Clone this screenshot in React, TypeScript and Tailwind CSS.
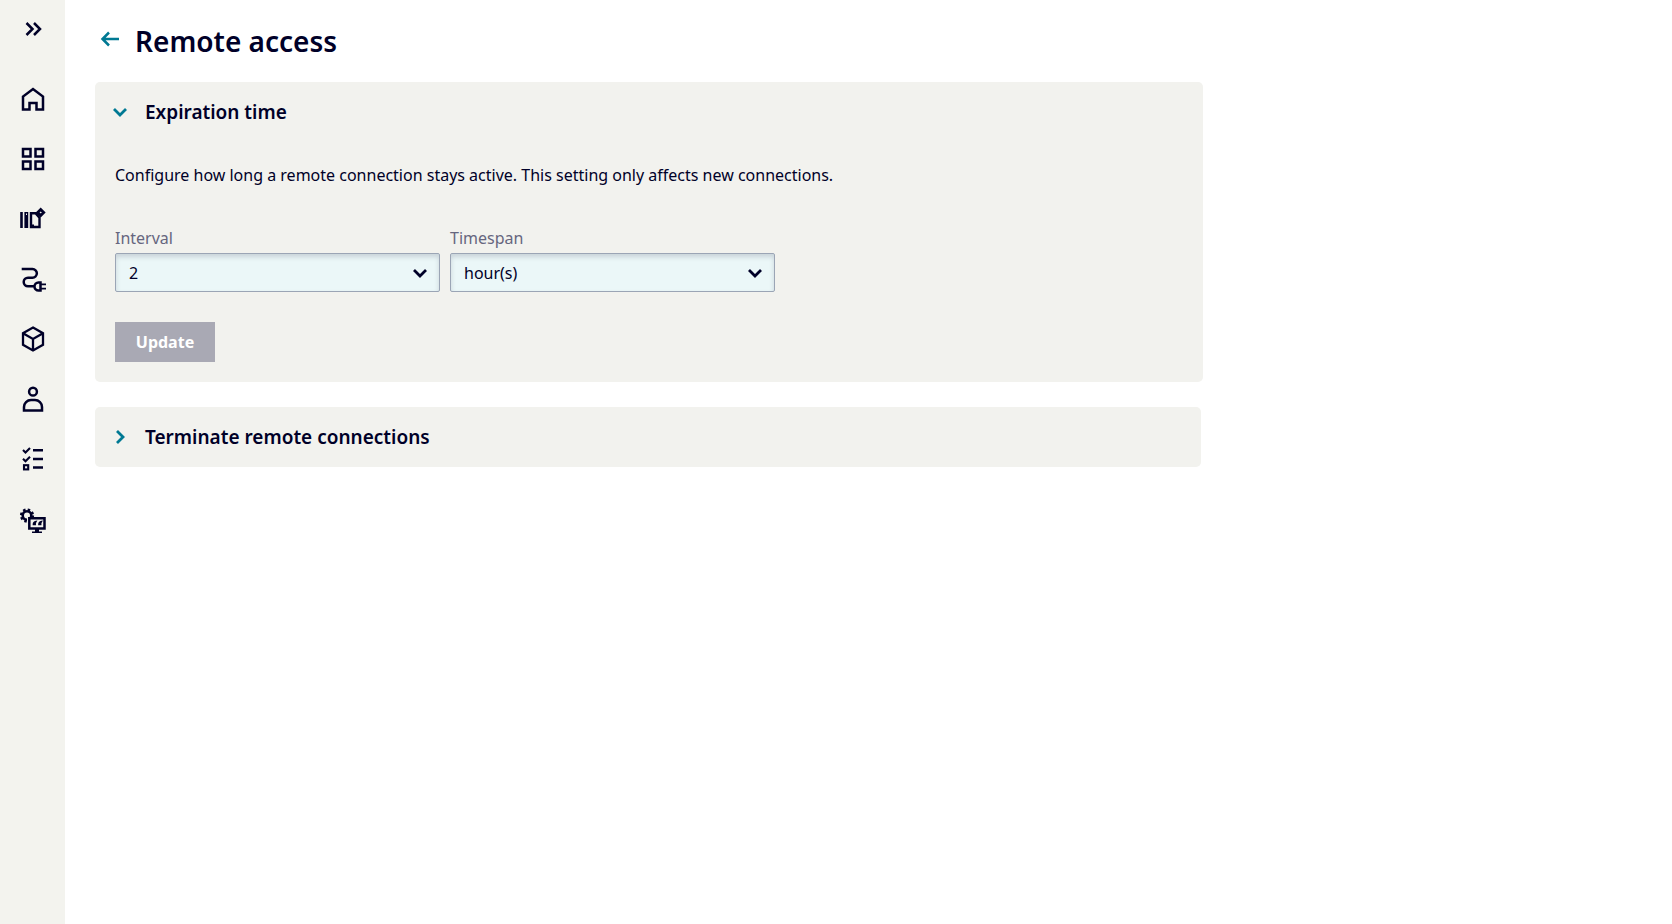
import React, { useState } from 'react';

const Icon = ({ children }: { children: React.ReactNode }) => (
  <svg width="28" height="28" viewBox="0 0 28 28" fill="none" stroke="currentColor" strokeWidth="2.5" aria-hidden="true">
    {children}
  </svg>
);

const Chevron = ({ className }: { className?: string }) => (
  <svg width="16" height="16" viewBox="0 0 16 16" fill="none" stroke="currentColor" strokeWidth="2.8" className={className} aria-hidden="true">
    <path d="M2 5l6 6 6-6" />
  </svg>
);

const navItems = [
  {
    label: 'Home',
    icon: <path d="M4 24.5V11.5L14 4l10 7.5v13h-6.5V18h-7v6.5z" />,
  },
  {
    label: 'Dashboard',
    icon: (
      <>
        <rect x="4" y="4" width="7.5" height="7.5" />
        <rect x="16.5" y="4" width="7.5" height="7.5" />
        <rect x="4" y="16.5" width="7.5" height="7.5" />
        <rect x="16.5" y="16.5" width="7.5" height="7.5" />
      </>
    ),
  },
  {
    label: 'Library',
    icon: (
      <>
        <path d="M2.5 7V23" strokeWidth="2.6" />
        <path d="M7.3 7V23" strokeWidth="3.8" />
        <path d="M7.5 8.5V10" stroke="#f3f3ee" strokeWidth="1" />
        <path d="M12 8.2h4.5l4 4.500V22H12z" strokeWidth="2.4" />
        <path d="M13 20.5h2" strokeWidth="2" />
        <path d="M21.7 4.5l3 3-3 3-3-3z" strokeWidth="2.8" />
      </>
    ),
  },
  {
    label: 'Connectors',
    icon: (
      <>
        <path d="M2.7 4H13.5a4.35 4.35 0 0 1 0 8.7H9a4.3 4.3 0 0 0 0 8.6h6.5" />
        <path d="M21.5 17.5v8h-2a4 4 0 0 1 0-8z" />
        <path d="M22 19.3h5M22 23.7h5" strokeWidth="1.8" />
      </>
    ),
  },
  {
    label: 'Apps',
    icon: <path d="M14 2.5L24 8.2v11.6L14 25.5 4 19.8V8.2zM4 8.2l10 5.8 10-5.8M14 14v11.5" strokeWidth="2.3" />,
  },
  {
    label: 'Users',
    icon: (
      <>
        <circle cx="14" cy="6.7" r="3.9" />
        <path d="M5 25.5V22a7 7 0 0 1 7-7h4a7 7 0 0 1 7 7v3.5z" />
      </>
    ),
  },
  {
    label: 'Tasks',
    icon: (
      <>
        <path d="M4 5l2.5 2.5L11 3M4 13.7l2.5 2.5 4.5-4.5" strokeWidth="2.1" />
        <rect x="5" y="20.2" width="4.2" height="4.2" strokeWidth="2.1" />
        <path d="M14 5.3h10M14 14h10M14 22.5h10" />
      </>
    ),
  },
  {
    label: 'System',
    icon: (
      <>
        <circle cx="8" cy="10.5" r="5.8" strokeWidth="2.6" strokeDasharray="2.4 2.155" />
        <circle cx="8" cy="10.5" r="4.3" strokeWidth="2.6" />
        <path d="M8 12h20v16H8z" fill="#f3f3ee" stroke="none" />
        <path d="M10.3 13.2h15.2v10.3H10.3z" />
        <path d="M13 27.5h10" strokeWidth="2" />
        <path d="M18 24v3" strokeWidth="4" />
        <path d="M17 16.500q-2.600.5-2.600 3h1.800v-1.500zM22.500 16.500q-2.600.5-2.600 3h1.800v-1.500z" fill="currentColor" strokeWidth="1.500" />
      </>
    ),
  },
];

const SelectField = ({ id, label, value, options, onChange }: {
  id: string;
  label: string;
  value: string;
  options: string[];
  onChange: (value: string) => void;
}) => (
  <div className="w-[325px]">
    <label htmlFor={id} className="block text-base leading-[30px] text-[#66667e]">
      {label}
    </label>
    <div className="relative">
      <select
        id={id}
        value={value}
        onChange={(e) => onChange(e.target.value)}
        className="block w-full h-[39px] appearance-none rounded-xs border border-[#9ba5b5] bg-[#ebf7f8] pl-[13px] pr-10 text-base text-[#000028] shadow-[inset_0_3px_5px_rgba(0,0,40,0.15)]"
      >
        {options.map((option) => (
          <option key={option} value={option}>{option}</option>
        ))}
      </select>
      <Chevron className="pointer-events-none absolute right-3 top-3" />
    </div>
  </div>
);

const App = () => {
  const [interval, setInterval] = useState<string>('2');
  const [timespan, setTimespan] = useState<string>('hour(s)');
  const [expirationOpen, setExpirationOpen] = useState<boolean>(true);
  const [terminateOpen, setTerminateOpen] = useState<boolean>(false);

  return (
    <div className="flex min-h-screen bg-white text-[#000028] font-['Noto_Sans',sans-serif]">
      <nav className="w-[65px] shrink-0 bg-[#f3f3ee]">
        <button type="button" aria-label="Expand menu" className="flex h-[58px] w-full items-center justify-center">
          <Icon>
            <path d="M7.5 8l6 6-6 6M15 8l6 6-6 6" />
          </Icon>
        </button>
        <ul className="pt-[11px]">
          {navItems.map((item) => (
            <li key={item.label}>
              <a href="#" aria-label={item.label} className="flex h-[60px] items-center justify-center">
                <Icon>{item.icon}</Icon>
              </a>
            </li>
          ))}
        </ul>
      </nav>

      <main className="flex-1 pl-[30px] pr-6">
        <header className="flex h-[82px] items-center gap-3">
          <button type="button" aria-label="Back" className="text-[#007993]">
            <Icon>
              <path d="M24 12H8M14 5.5L7.5 12l6.5 6.5" />
            </Icon>
          </button>
          <h1 className="text-[28px] font-semibold leading-10">Remote access</h1>
        </header>

        <section className="max-w-[1108px] rounded-[5px] bg-[#f2f2ee]">
          <h2>
            <button
              type="button"
              aria-expanded={expirationOpen}
              onClick={() => setExpirationOpen(!expirationOpen)}
              className="flex h-[60px] w-full items-center gap-[17px] pl-[17px] text-[19px] font-semibold"
            >
              <Chevron className={expirationOpen ? 'text-[#007993]' : 'text-[#007993] -rotate-90'} />
              Expiration time
            </button>
          </h2>
          {expirationOpen && (
            <form className="px-5 pb-5" onSubmit={(e) => e.preventDefault()}>
              <p className="pt-[21px] text-base leading-6">
                Configure how long a remote connection stays active. This setting only affects new connections.
              </p>
              <div className="mt-9 flex flex-wrap gap-[10px]">
                <SelectField id="interval" label="Interval" value={interval} options={['1', '2', '3', '4', '5']} onChange={setInterval} />
                <SelectField id="timespan" label="Timespan" value={timespan} options={['hour(s)', 'day(s)']} onChange={setTimespan} />
              </div>
              <button type="submit" disabled className="mt-[30px] h-10 w-[100px] bg-[#a9a9b4] text-base font-bold text-white">
                Update
              </button>
            </form>
          )}
        </section>

        <section className="mt-[25px] max-w-[1106px] rounded-[5px] bg-[#f2f2ee]">
          <h2>
            <button
              type="button"
              aria-expanded={terminateOpen}
              onClick={() => setTerminateOpen(!terminateOpen)}
              className="flex h-[60px] w-full items-center gap-[17px] pl-[17px] text-[19px] font-semibold"
            >
              <Chevron className={terminateOpen ? 'text-[#007993]' : 'text-[#007993] -rotate-90'} />
              Terminate remote connections
            </button>
          </h2>
        </section>
      </main>
    </div>
  );
};

export default App;
